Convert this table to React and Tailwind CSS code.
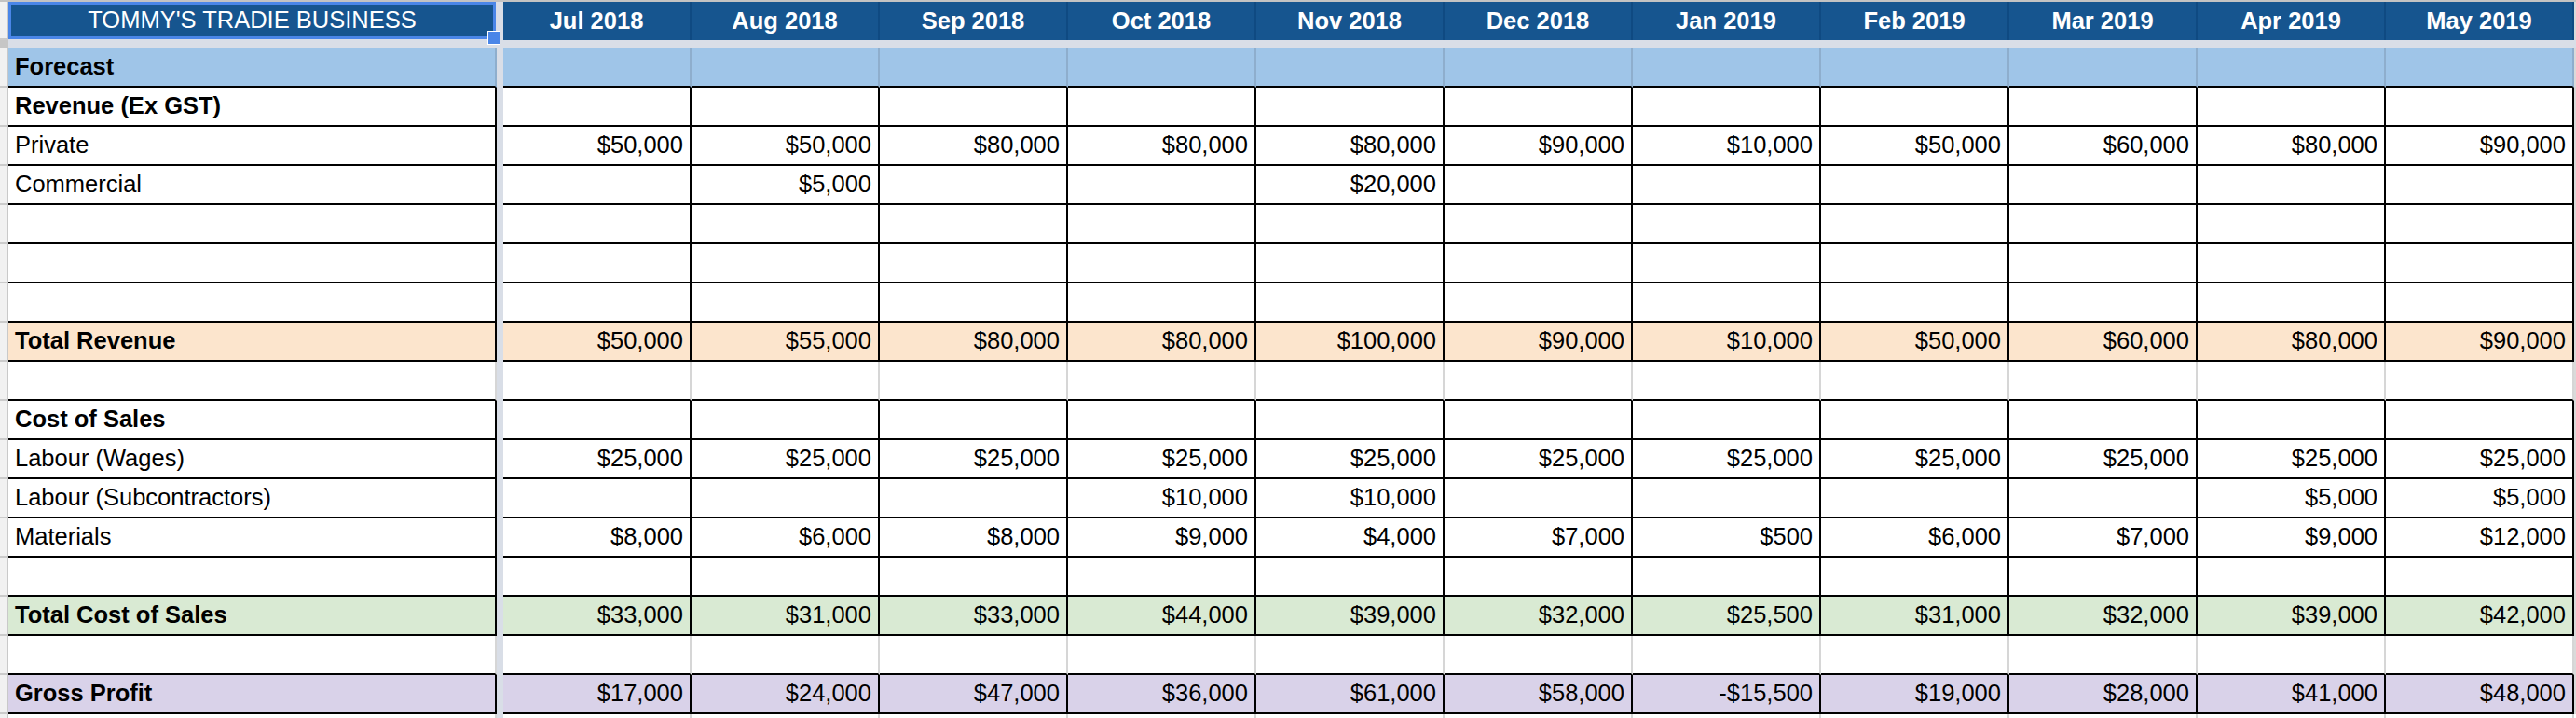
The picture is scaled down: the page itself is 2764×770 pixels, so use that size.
import React from 'react'

const months = ['Jul 2018', 'Aug 2018', 'Sep 2018', 'Oct 2018', 'Nov 2018', 'Dec 2018', 'Jan 2019', 'Feb 2019', 'Mar 2019', 'Apr 2019', 'May 2019']

const e = Array(11).fill(null)

// rows of the sheet, top to bottom
const rows = [
    { label: 'Forecast', bold: true, bg: 'bg-[#9fc5e8]', line: 'blue', values: e },
    { label: 'Revenue (Ex GST)', bold: true, values: e },
    { label: 'Private', values: [50000, 50000, 80000, 80000, 80000, 90000, 10000, 50000, 60000, 80000, 90000] },
    { label: 'Commercial', values: [null, 5000, null, null, 20000, null, null, null, null, null, null] },
    { label: '', values: e },
    { label: '', values: e },
    { label: '', values: e },
    { label: 'Total Revenue', bold: true, bg: 'bg-[#fce5cd]', values: [50000, 55000, 80000, 80000, 100000, 90000, 10000, 50000, 60000, 80000, 90000] },
    { label: '', line: 'gray', values: e },
    { label: 'Cost of Sales', bold: true, values: e },
    { label: 'Labour (Wages)', values: Array(11).fill(25000) },
    { label: 'Labour (Subcontractors)', values: [null, null, null, 10000, 10000, null, null, null, null, 5000, 5000] },
    { label: 'Materials', values: [8000, 6000, 8000, 9000, 4000, 7000, 500, 6000, 7000, 9000, 12000] },
    { label: '', values: e },
    { label: 'Total Cost of Sales', bold: true, bg: 'bg-[#d9ead3]', values: [33000, 31000, 33000, 44000, 39000, 32000, 25500, 31000, 32000, 39000, 42000] },
    { label: '', line: 'gray', values: e },
    { label: 'Gross Profit', bold: true, bg: 'bg-[#d9d2e9]', values: [17000, 24000, 47000, 36000, 61000, 58000, -15500, 19000, 28000, 41000, 48000] },
]

const lines = {
    black: 'border-r-black',
    gray: 'border-r-[#d6d6d6]',
    blue: 'border-r-[#8eaecd]',
}

const fmt = (v) => {
    if (v === null || v === undefined) return ''
    return (v < 0 ? '-' : '') + '$' + Math.abs(v).toLocaleString('en-US')
}

const Strip = ({ className = '' }) => (
    <div className={`w-[9px] shrink-0 bg-[#f1f1f1] border-r border-r-[#c9c9c9] border-b-2 border-b-[#cbcbcb] ${className}`}></div>
)

const Gap = () => <div className="w-[7px] shrink-0 bg-[#d9dee7]"></div>

const Row = ({ label, bold, bg = 'bg-white', line = 'black', values }) => {
    const vline = lines[line]
    return (
        <div className="flex h-[42px]">
            <Strip />
            <div className={`w-[524px] shrink-0 flex items-center pl-[7px] border-r-2 border-b-2 border-b-black ${vline} ${bg} ${bold ? 'font-bold' : ''}`}>
                {label}
            </div>
            <Gap />
            {values.map((v, i) => (
                <div key={i} className={`w-[202px] shrink-0 flex items-center justify-end pr-[7px] border-r-2 border-b-2 border-b-black ${vline} ${bg}`}>
                    {fmt(v)}
                </div>
            ))}
        </div>
    )
}

export default function App() {
    return (
        <div
            className="w-[2764px] h-[770px] overflow-hidden bg-[#dadada] text-black text-[25.5px] leading-none"
            style={{ fontFamily: '"Liberation Sans", Arial, sans-serif' }}
        >
            {/* month header */}
            <div className="flex h-[43px] border-t-2 border-t-[#c3c3c3]">
                <Strip className="bg-[#e8e8e8]" />
                <div className="relative w-[524px] shrink-0 bg-[#d9dee7] z-10">
                    <div className="w-[523px] h-[40px] border-[3px] border-[#4a86e8] bg-[#16558f] flex items-center justify-center text-white">
                        TOMMY'S TRADIE BUSINESS
                    </div>
                    <div className="absolute left-[514px] top-[31px] w-[14px] h-[15px] bg-[#4a86e8] border border-white"></div>
                </div>
                <Gap />
                {months.map((m) => (
                    <div key={m} className="w-[202px] shrink-0 flex items-center justify-center bg-[#16558f] border-r-2 border-r-[#0f4a82] text-white font-bold">
                        {m}
                    </div>
                ))}
            </div>

            {/* frozen row divider */}
            <div className="flex h-[9px] bg-[#d9dee7]">
                <div className="w-[9px] shrink-0 bg-[#c6c6c6]"></div>
            </div>

            {rows.map((r, i) => (
                <Row key={i} {...r} />
            ))}

            {/* next empty row peeking in */}
            <div className="flex h-[4px] bg-white">
                <div className="w-[9px] shrink-0 bg-[#f1f1f1] border-r border-r-[#c9c9c9]"></div>
                <div className="w-[524px] shrink-0 border-r-2 border-r-[#d6d6d6]"></div>
                <Gap />
                {months.map((m) => (
                    <div key={m} className="w-[202px] shrink-0 border-r-2 border-r-[#d6d6d6]"></div>
                ))}
            </div>
        </div>
    )
}
